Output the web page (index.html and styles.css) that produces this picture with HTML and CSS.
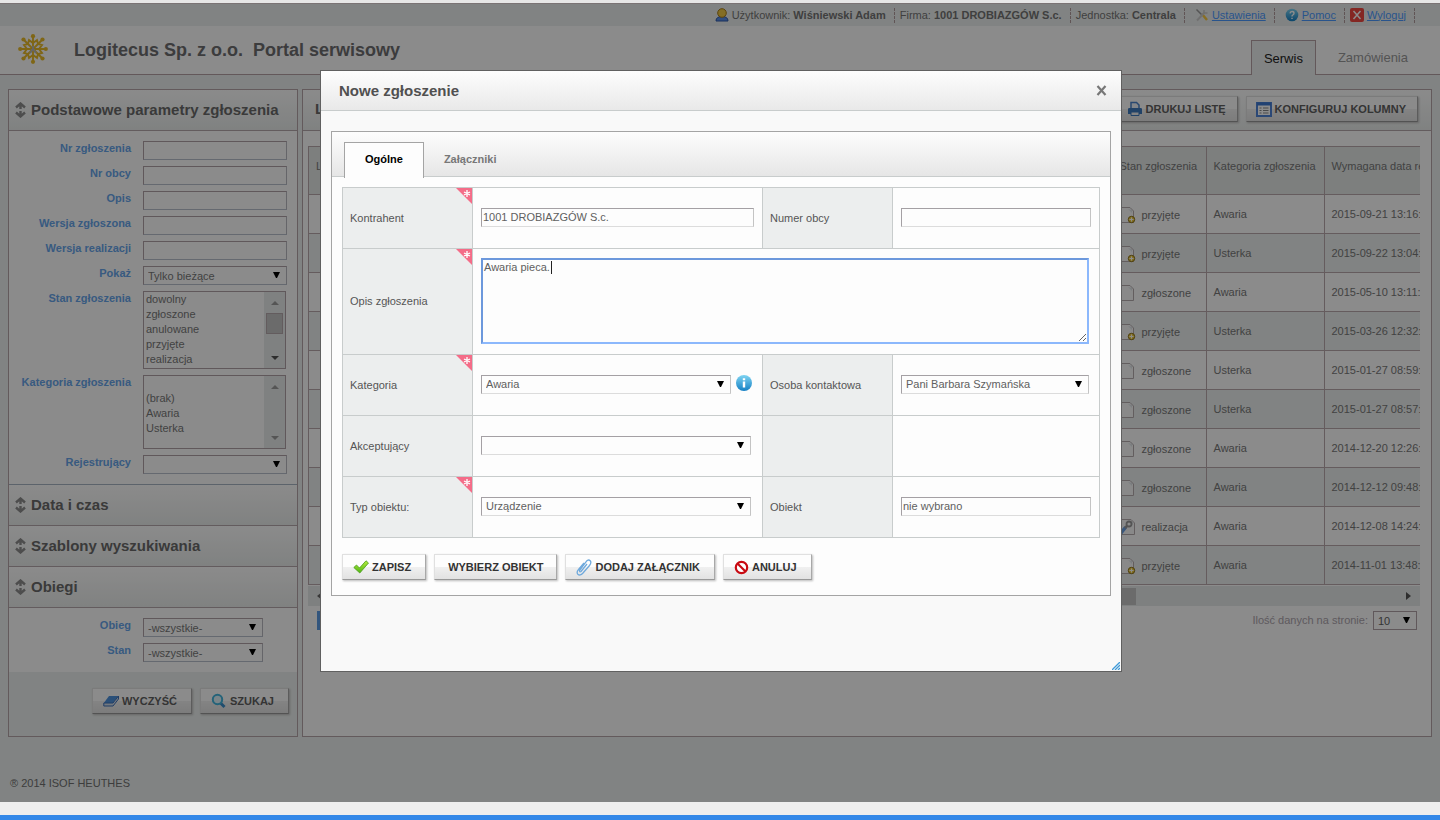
FILE: index.html
```html
<!DOCTYPE html>
<html lang="pl">
<head>
<meta charset="utf-8">
<title>Portal serwisowy – Nowe zgłoszenie</title>
<link rel="stylesheet" href="styles.css">
</head>
<body>
<svg class="defs" aria-hidden="true">
  <defs>
    <linearGradient id="sky" x1="0" y1="0" x2="0" y2="1"><stop offset="0" stop-color="#7fd4f2"/><stop offset="1" stop-color="#1580c4"/></linearGradient>
    <linearGradient id="lime" x1="0" y1="0" x2="0" y2="1"><stop offset="0" stop-color="#b5ee3c"/><stop offset="1" stop-color="#4fb414"/></linearGradient>
    <symbol id="updown" viewBox="0 0 11 16"><path d="M5.500 2V7M5.500 9V14M1 5.500L5.500 1.500L10 5.500M1 10.500L5.500 14.500L10 10.500" fill="none" stroke="#8c8c8c" stroke-width="2.400"/></symbol>
    <symbol id="doc" viewBox="0 0 16 17"><path d="M.5 .5H10L13.500 4V15.500H.5Z" fill="#fafafa" stroke="#b4acae"/><path d="M8 2L12 6V3Z" fill="#e0e6ea"/></symbol>
    <symbol id="doc-plus" viewBox="0 0 16 17"><use href="#doc" width="16" height="17"/><circle cx="11.500" cy="12.500" r="3.200" fill="#f0cc3c" stroke="#8a701c"/><path d="M11.500 10.500V14.500M9.500 12.500H13.500" stroke="#fff"/></symbol>
    <symbol id="doc-fix" viewBox="0 0 16 17"><use href="#doc" x="1" width="16" height="17"/><path d="M1 14L5 9" stroke="#6a9fe0" stroke-width="3.500" stroke-linecap="round"/><path d="M5 9L8 6" stroke="#999" stroke-width="2.500"/><circle cx="9" cy="5" r="2.500" fill="#fff" stroke="#999" stroke-width="1.800"/></symbol>
  </defs>
</svg>

<div class="chrome-top"></div>
<div class="page">
  <div class="topbar">
    <span class="topbar-item"><svg width="14" height="14" viewBox="0 0 14 14"><path d="M1 13Q1 8.500 7 8.500T13 13Z" fill="#5a8ee8" stroke="#2f58a8"/><circle cx="7" cy="5" r="4.300" fill="#f0c844" stroke="#a87c18"/></svg>Użytkownik: <b>Wiśniewski Adam</b></span>
    <span class="topbar-item">Firma: <b>1001 DROBIAZGÓW S.c.</b></span>
    <span class="topbar-item">Jednostka: <b>Centrala</b></span>
    <span class="topbar-item wide"><svg width="14" height="14" viewBox="0 0 14 14"><path d="M1.500 1.500L7 7" stroke="#999" stroke-width="1.500"/><path d="M7 6L12 12" stroke="#f8c840" stroke-width="2.500"/><path d="M2 12.500L9.500 4.500" stroke="#ccc" stroke-width="2"/><path d="M9 2V5H12.500" fill="none" stroke="#ccc" stroke-width="1.500"/></svg><a href="#">Ustawienia</a></span>
    <span class="topbar-item wide"><svg width="14" height="14" viewBox="0 0 14 14"><circle cx="7" cy="7" r="6.300" fill="url(#sky)"/><path d="M5 5.400Q5.200 3.500 7.100 3.500T9 5.200Q9 6.300 7.800 7Q7 7.500 7 8.400M7 9.800V11" fill="none" stroke="#fff" stroke-width="1.400"/></svg><a href="#">Pomoc</a></span>
    <span class="topbar-item"><svg width="14" height="14" viewBox="0 0 14 14"><rect width="14" height="14" rx="2" fill="#f04840"/><path d="M3.500 3L10.500 11M10.500 3L3.500 11" stroke="#fff" stroke-width="1.500"/></svg><a href="#">Wyloguj</a></span>
  </div>

  <header class="header">
    <svg class="logo" width="30" height="30" viewBox="-15 -15 30 30">
      <g fill="none" stroke="#e8ba28" stroke-width="1.900">
        <path d="M0-12V12M-12 0H12M-8.500-8.500L8.500 8.500M8.500-8.500L-8.500 8.500"/>
        <path d="M-4-9L0-6L4-9L5-5L9-4L6 0L9 4L5 5L4 9L0 6L-4 9L-5 5L-9 4L-6 0L-9-4L-5-5Z"/>
      </g>
      <g fill="#e8ba28"><circle cy="-12.800" r="2.100"/><circle cy="12.800" r="2.100"/><circle cx="-12.800" r="2.100"/><circle cx="12.800" r="2.100"/><circle cx="-9.500" cy="-9.500" r="2.100"/><circle cx="9.500" cy="-9.500" r="2.100"/><circle cx="-9.500" cy="9.500" r="2.100"/><circle cx="9.500" cy="9.500" r="2.100"/></g>
      <path d="M0-3V0M-3 4L0 0L3 4M-2 1H2" stroke="#b8b8b8" stroke-width="2" fill="none"/>
    </svg>
    <h1 class="brand">Logitecus Sp. z o.o.&nbsp; Portal serwisowy</h1>
    <nav class="main-tabs">
      <a href="#" class="main-tab active">Serwis</a>
      <a href="#" class="main-tab">Zamówienia</a>
    </nav>
  </header>

  <div class="content">
    <aside class="panel sidebar">
      <h2 class="panel-head"><svg width="11" height="16"><use href="#updown"/></svg>Podstawowe parametry zgłoszenia</h2>
      <form class="filters">
        <label for="f1">Nr zgłoszenia</label><input class="field" id="f1" type="text">
        <label for="f2">Nr obcy</label><input class="field" id="f2" type="text">
        <label for="f3">Opis</label><input class="field" id="f3" type="text">
        <label for="f4">Wersja zgłoszona</label><input class="field" id="f4" type="text">
        <label for="f5">Wersja realizacji</label><input class="field" id="f5" type="text">
        <label for="f6">Pokaż</label><select class="field pick" id="f6"><option>Tylko bieżące</option></select>
        <label for="f7">Stan zgłoszenia</label>
        <div class="listbox">
          <select id="f7" multiple size="5"><option>dowolny</option><option>zgłoszone</option><option>anulowane</option><option>przyjęte</option><option>realizacja</option></select>
          <div class="vbar"><i class="up"></i><i class="thumb"></i><i class="down on"></i></div>
        </div>
        <label for="f8">Kategoria zgłoszenia</label>
        <div class="listbox">
          <select id="f8" class="short" multiple size="4"><option></option><option>(brak)</option><option>Awaria</option><option>Usterka</option></select>
          <div class="vbar"><i class="up"></i><i class="down"></i></div>
        </div>
        <label for="f9">Rejestrujący</label><select class="field pick" id="f9"><option></option></select>
      </form>
      <h2 class="panel-head"><svg width="11" height="16"><use href="#updown"/></svg>Data i czas</h2>
      <h2 class="panel-head"><svg width="11" height="16"><use href="#updown"/></svg>Szablony wyszukiwania</h2>
      <h2 class="panel-head"><svg width="11" height="16"><use href="#updown"/></svg>Obiegi</h2>
      <form class="filters compact">
        <label for="g1">Obieg</label><select class="field pick" id="g1"><option>-wszystkie-</option></select>
        <label for="g2">Stan</label><select class="field pick" id="g2"><option>-wszystkie-</option></select>
      </form>
      <div class="sidebar-actions">
        <button class="btn" type="button"><svg width="16" height="14" viewBox="0 0 16 14"><path d="M6 2H15.500L10 9H.8Z" fill="#4f92dc"/><path d="M.8 9H10L15.500 2V5L10 12H.8Z" fill="#d4dce8" stroke="#3c70b8"/></svg>WYCZYŚĆ</button>
        <button class="btn" type="button"><svg width="16" height="16" viewBox="0 0 16 16"><path d="M9.500 10L13.500 14" stroke="#3a8cc8" stroke-width="3"/><circle cx="6.500" cy="6.500" r="4.700" fill="#dff2fa" stroke="#42b4dc" stroke-width="2"/></svg>SZUKAJ</button>
      </div>
    </aside>

    <main class="panel list">
      <div class="panel-head list-head">
        <h2 class="list-title">Lista zgłoszeń</h2>
        <button class="btn" type="button"><svg width="16" height="16" viewBox="0 0 16 16"><path d="M4 8V1.500H9.500L12 4V8" fill="#eef4fc" stroke="#4c84cc" stroke-width="1.500"/><path d="M1 8Q1 7 2.500 7H13.500Q15 7 15 8V13H1Z" fill="#3c78bc"/><path d="M4 11H12V14.500H4Z" fill="#eee" stroke="#3c78bc"/></svg>DRUKUJ LISTĘ</button>
        <button class="btn" type="button"><svg width="16" height="15" viewBox="0 0 16 15"><rect x="1" y="1" width="14" height="13" fill="#fff" stroke="#4f84d8" stroke-width="2"/><path d="M1 2H15" stroke="#3f78d0" stroke-width="3"/><path d="M3.500 6H5.500M3.500 8.500H5.500M3.500 11H5.500M7 6H12.500M7 8.500H12.500M7 11H12.500" stroke="#888"/></svg>KONFIGURUJ KOLUMNY</button>
      </div>
      <div class="grid-wrap">
        <table class="grid">
          <colgroup><col><col class="c-state"><col class="c-cat"><col class="c-date"></colgroup>
          <thead><tr><th>Lp.</th><th>Stan zgłoszenia</th><th>Kategoria zgłoszenia</th><th>Wymagana data realizacji</th></tr></thead>
          <tbody>
            <tr><td></td><td><span class="state"><svg width="16" height="17"><use href="#doc-plus"/></svg>przyjęte</span></td><td>Awaria</td><td>2015-09-21 13:16:00</td></tr>
            <tr><td></td><td><span class="state"><svg width="16" height="17"><use href="#doc-plus"/></svg>przyjęte</span></td><td>Usterka</td><td>2015-09-22 13:04:00</td></tr>
            <tr><td></td><td><span class="state"><svg width="16" height="17"><use href="#doc"/></svg>zgłoszone</span></td><td>Awaria</td><td>2015-05-10 13:11:00</td></tr>
            <tr><td></td><td><span class="state"><svg width="16" height="17"><use href="#doc-plus"/></svg>przyjęte</span></td><td>Usterka</td><td>2015-03-26 12:32:00</td></tr>
            <tr><td></td><td><span class="state"><svg width="16" height="17"><use href="#doc"/></svg>zgłoszone</span></td><td>Usterka</td><td>2015-01-27 08:59:00</td></tr>
            <tr><td></td><td><span class="state"><svg width="16" height="17"><use href="#doc"/></svg>zgłoszone</span></td><td>Usterka</td><td>2015-01-27 08:57:00</td></tr>
            <tr><td></td><td><span class="state"><svg width="16" height="17"><use href="#doc"/></svg>zgłoszone</span></td><td>Awaria</td><td>2014-12-20 12:26:00</td></tr>
            <tr><td></td><td><span class="state"><svg width="16" height="17"><use href="#doc"/></svg>zgłoszone</span></td><td>Awaria</td><td>2014-12-12 09:48:00</td></tr>
            <tr><td></td><td><span class="state"><svg width="16" height="17"><use href="#doc-fix"/></svg>realizacja</span></td><td>Awaria</td><td>2014-12-08 14:24:00</td></tr>
            <tr><td></td><td><span class="state"><svg width="16" height="17"><use href="#doc-plus"/></svg>przyjęte</span></td><td>Awaria</td><td>2014-11-01 13:48:00</td></tr>
          </tbody>
        </table>
        <div class="hbar"><i class="left"></i><i class="hthumb"></i><i class="right"></i></div>
      </div>
      <div class="pager">
        <a href="#" class="page-no">1</a>
        <label for="per">Ilość danych na stronie:</label>
        <select class="field pick per" id="per"><option>10</option></select>
      </div>
    </main>
  </div>
  <footer class="footer">® 2014 ISOF HEUTHES</footer>

  <div class="overlay"></div>

  <section class="modal" role="dialog" aria-labelledby="dlg">
    <div class="modal-head">
      <h2 class="modal-title" id="dlg">Nowe zgłoszenie</h2>
      <button class="close" type="button" aria-label="Zamknij"><svg width="11" height="11" viewBox="0 0 11 11"><path d="M1.500 1L9.500 10M9.500 1L1.500 10" stroke="#777" stroke-width="2.200"/></svg></button>
    </div>
    <div class="modal-body">
      <div class="box">
        <div class="tabs" role="tablist">
          <button class="tab active" type="button" role="tab">Ogólne</button>
          <button class="tab" type="button" role="tab">Załączniki</button>
        </div>
        <form class="box-body">
          <table class="form">
            <colgroup><col class="f-label"><col class="f-wide"><col class="f-label"><col></colgroup>
            <tr><th class="req"><label for="m1">Kontrahent</label></th><td><input class="field" id="m1" type="text" value="1001 DROBIAZGÓW S.c."></td><th><label for="m2">Numer obcy</label></th><td><input class="field" id="m2" type="text"></td></tr>
            <tr class="tall"><th class="req"><label for="m3">Opis zgłoszenia</label></th><td colspan="3"><div class="area"><textarea id="m3">Awaria pieca.</textarea><span class="caret"></span></div></td></tr>
            <tr><th class="req"><label for="m4">Kategoria</label></th><td><div class="with-info"><select class="field pick" id="m4"><option>Awaria</option></select><svg width="16" height="16" viewBox="0 0 16 16"><circle cx="8" cy="8" r="8" fill="url(#sky)"/><path d="M8 3.200V5.200M8 6.500V12.500" fill="none" stroke="#fff" stroke-width="2.400"/></svg></div></td><th><label for="m5">Osoba kontaktowa</label></th><td><select class="field pick" id="m5"><option>Pani Barbara Szymańska</option></select></td></tr>
            <tr><th><label for="m6">Akceptujący</label></th><td><select class="field pick" id="m6"><option></option></select></td><th></th><td></td></tr>
            <tr><th class="req"><label for="m7">Typ obiektu:</label></th><td><select class="field pick" id="m7"><option>Urządzenie</option></select></td><th><label for="m8">Obiekt</label></th><td><input class="field" id="m8" type="text" value="nie wybrano"></td></tr>
          </table>
          <div class="actions">
            <button class="btn" type="button"><svg width="16" height="14" viewBox="0 0 16 14"><path d="M.8 7.500L3.500 5L6.500 8L13 .8L15.500 3L6.800 13Z" fill="url(#lime)" stroke="#4a9c1c" stroke-width=".8"/></svg>ZAPISZ</button>
            <button class="btn plain" type="button">WYBIERZ OBIEKT</button>
            <button class="btn" type="button"><svg width="16" height="17" viewBox="0 0 16 17"><path d="M11 5L5 12.500Q3.500 13.500 3.500 11.500L9.800 3.200Q12-.2 14.200 1.700Q15.800 3.500 13.500 6.500L7 14Q4 17.300 1.800 15.200Q.2 13 2.500 10.500L8 4" fill="none" stroke="#6fa9dc" stroke-width="1.300"/></svg>DODAJ ZAŁĄCZNIK</button>
            <button class="btn" type="button"><svg width="15" height="15" viewBox="0 0 15 15"><circle cx="7.500" cy="7.500" r="5.700" fill="#fff" stroke="#c80a12" stroke-width="2.200"/><path d="M3.500 3.500L11.500 11.500" stroke="#c80a12" stroke-width="2.200"/></svg>ANULUJ</button>
          </div>
        </form>
      </div>
    </div>
    <svg class="grip" width="8" height="8" viewBox="0 0 8 8"><path d="M0 8L8 0M3 8L8 3M6 8L8 6" stroke="#3f9ad8" stroke-width="1.300"/></svg>
  </section>
</div>
<div class="chrome-bottom"></div>
</body>
</html>
```
FILE: styles.css
```css
* { box-sizing: border-box; }
body {
  margin: 0;
  min-height: 100vh;
  display: flex;
  flex-direction: column;
  font: 11px/15px "Liberation Sans", Arial, sans-serif;
  color: #7c7c7c;
}
h1, h2 { margin: 0; }
input, select, textarea, button { font: inherit; color: inherit; margin: 0; }
a { color: #4c9aff; }
.defs { position: absolute; width: 0; height: 0; }

.chrome-top { height: 4px; background: #e6e6e6; border-bottom: 1px solid #7a7374; }
.chrome-bottom { height: 18px; background: #eeeeee; border-bottom: 5px solid #3388e8; }
.page { position: relative; flex: 1; display: flex; flex-direction: column; background: #ebefee; }
.overlay { position: absolute; inset: 0; background: rgba(0, 0, 0, .45); }

.topbar {
  display: flex;
  align-items: center;
  justify-content: flex-end;
  height: 22px;
  padding-right: 25px;
  color: #747474;
}
.topbar-item { display: flex; align-items: center; gap: 3px; padding: 0 8px 0 5px; border-right: 1px dashed #b09a9c; }
.topbar-item svg { flex: none; }
.topbar-item.wide { padding-left: 10px; }

.header { display: flex; align-items: center; height: 49px; padding: 0 16px 0 18px; background: #fdfdfd; border-bottom: 1px solid #b4a0a4; }
.logo { margin-right: 26px; margin-bottom: 2px; }
.brand { flex: 1; font-size: 18px; line-height: 24px; color: #6e6e70; }
.main-tabs { display: flex; align-self: flex-end; height: 35px; font-size: 13px; line-height: 36px; gap: 6px; margin-bottom: -1px; }
.main-tab { padding: 0 16px; color: #999; text-decoration: none; }
.main-tab.active { padding: 0 12px; background: #ebefee; border: 1px solid #b4a0a4; border-bottom: 0; color: #222; }

.content { display: flex; gap: 4px; padding: 14px 8px 0; }
.panel { border: 1px solid #b4a4a8; background: #fdfdfd; }
.sidebar { flex: none; width: 290px; background: #ebefee; }
.list { flex: 1; min-width: 0; }
.panel-head {
  display: flex;
  align-items: center;
  gap: 5px;
  height: 41px;
  padding: 0 6px;
  background: linear-gradient(#fdfdfd, #e9eceb);
  border-bottom: 1px solid #b4a8ac;
  font-size: 15px;
  line-height: 20px;
  font-weight: bold;
  color: #6a6a6a;
}

.filters {
  display: grid;
  grid-template-columns: 122px 1fr;
  gap: 6px 12px;
  padding: 10px;
  padding-left: 0;
  background: #fdfdfd;
  border-bottom: 1px solid #a8b4c4;
}
.filters label { text-align: right; white-space: nowrap; font-weight: bold; line-height: 14px; color: #66a4ea; }
.filters.compact { padding-right: 34px; border-bottom: 0; }
.field {
  display: block;
  width: 100%;
  height: 19px;
  padding: 0 1px;
  border: 1px solid #d8d8d8;
  border-color: #a4a0a4 #c4c4c4 #dcdcdc #a4a0a4;
  border-radius: 0;
  background: #fdfdfd;
  color: #606060;
  outline: 0;
}
.pick {
  appearance: none;
  padding: 1px 20px 0 4px;
  background: #fdfdfd url("data:image/svg+xml,%3Csvg xmlns='http://www.w3.org/2000/svg' width='7' height='7'%3E%3Cpath d='M0 0H7L4 6H3Z'/%3E%3C/svg%3E") no-repeat right 6px top 5px;
}
.filters .field { border-color: #b0a0a6 #b8b8c0 #b8c0cc #b0a0a6; color: #787878; }
.listbox { display: flex; border: 1px solid #b0a0a6; margin-right: 1px; background: #fdfdfd; }
.listbox select { flex: 1; min-width: 0; height: 76px; border: 0; border-radius: 0; padding: 1px 0 0; background: none; overflow: hidden; color: #787878; outline: 0; }
.listbox select.short { height: 72px; }
.listbox option { min-height: 15px; height: 15px; padding: 0 2px; line-height: 15px; }
.vbar { flex: none; width: 21px; padding: 9px 2px 8px; display: flex; flex-direction: column; align-items: center; background: #e8ecec; }
.vbar .up { border: 4px solid transparent; border-top: 0; border-bottom-color: #9c9c9c; }
.vbar .down { border: 4px solid transparent; border-bottom: 0; border-top-color: #9c9c9c; margin-top: auto; }
.vbar .down.on { border-top-color: #555; }
.vbar .thumb { width: 17px; height: 21px; margin-top: 8px; background: #c4c4c4; border: 1px solid #b4a8ac; }
.sidebar-actions { display: flex; justify-content: flex-end; gap: 8px; padding: 16px 8px 22px; }

.btn {
  display: flex;
  align-items: center;
  gap: 3px;
  height: 26px;
  padding: 0 14px 0 10px;
  border: 1px solid #e0e0e0;
  border-right-color: #a8a8a8;
  border-bottom-color: #989898;
  background: linear-gradient(#fdfdfd 50%, #f0f0f0 50%, #e2e2e2);
  box-shadow: 1px 1px 2px #bbb;
  font-size: 11px;
  font-weight: bold;
  color: #333;
}
.btn.plain { padding: 0 13px; }
.sidebar .btn, .list .btn { color: #606060; }

.list-head { justify-content: flex-end; gap: 8px; padding: 0 13px 2px 12px; }
.list-head .btn { padding: 0 11px 0 9px; }
.list-title { flex: 1; font-size: 15px; }
.grid-wrap { margin: 15px 11px 0 5px; }
.grid { width: 100%; table-layout: fixed; border-collapse: collapse; color: #787878; }
.c-state { width: 94px; }
.c-cat { width: 118px; }
.c-date { width: 96px; }
.grid th, .grid td {
  height: 39px;
  padding: 0 0 0 7px;
  border: 1px solid #b8a8ac;
  border-right: 0;
  text-align: left;
  font-weight: normal;
  white-space: nowrap;
  overflow: hidden;
}
.grid th { height: 48px; padding-bottom: 8px; background: #e3e7e6; }
.grid tbody tr:nth-child(even) { background: #ebefee; }
.state { display: flex; align-items: center; gap: 6px; padding-top: 2px; }
.hbar { display: flex; align-items: center; height: 20px; margin-top: 1px; padding: 0 9px; background: #e6eaea; }
.hbar .left { border: 4px solid transparent; border-left: 0; border-right: 5px solid #666; }
.hbar .right { border: 4px solid transparent; border-right: 0; border-left: 5px solid #555; margin-left: auto; }
.hthumb { flex: none; width: 74%; height: 17px; margin-left: 4px; background: #c4c4c4; }
.pager { display: flex; align-items: center; gap: 5px; padding: 5px 14px 0; color: #aca4ac; }
.page-no { margin-right: auto; padding: 2px 6px; background: #5c9ce4; color: #fff; text-decoration: none; }
.pager .per { width: 44px; border-color: #b0a0a6; }

.footer { padding: 39px 10px 0; color: #707070; }

.modal {
  position: absolute;
  left: 320px;
  top: 66px;
  width: 802px;
  min-height: 602px;
  border: 1px solid #606060;
  background: #f9f9f9;
  color: #555;
}
.modal-head {
  display: flex;
  align-items: center;
  justify-content: space-between;
  height: 40px;
  padding: 0 14px 0 18px;
  background: linear-gradient(#fdfdfd, #e9e9e9);
  border-bottom: 1px solid #c8cccc;
}
.modal-title { font-size: 15px; line-height: 20px; color: #505050; }
.close { display: flex; padding: 0; border: 0; background: none; }
.modal-body { padding: 20px 10px; }
.box { border: 1px solid #a4a4a4; background: #fdfdfd; }
.tabs { display: flex; align-items: flex-end; height: 45px; padding: 0 12px; background: linear-gradient(#fdfdfd, #e6e6e6); border-bottom: 1px solid #c8cccc; }
.tab { height: 35px; padding: 2px 20px 0; border: 0; background: none; font-weight: bold; color: #777; }
.tab.active { height: 36px; margin-bottom: -2px; padding: 0 20px 2px; border: 1px solid #a4a4a4; border-bottom: 0; background: #fdfdfd; color: #000; }
.box-body { padding: 10px 10px 15px; }
.form { width: 100%; table-layout: fixed; border-collapse: collapse; }
.f-label { width: 130px; }
.f-wide { width: 290px; }
.form tr { height: 61px; }
.form tr.tall { height: 106px; }
.form th, .form td { padding: 0 7px; border: 1px solid #c8cccc; text-align: left; font-weight: normal; }
.form td { padding: 0 8px 2px; }
.form th { background: #eceeee; }
.form td .field { max-width: 191px; }
.form td .pick { max-width: 188px; }
.form td:nth-child(2) .field { max-width: 273px; }
.form td:nth-child(2) .pick { max-width: 270px; }
.form .req { background: #eceeee url("data:image/svg+xml,%3Csvg xmlns='http://www.w3.org/2000/svg' width='16' height='16'%3E%3Cpath d='M0 0H16V16Z' fill='%23f46c88'/%3E%3Cpath d='M11 2V9M8 4L14 7M14 4L8 7' stroke='%23fff' stroke-width='1.300'/%3E%3C/svg%3E") no-repeat right top; }
.with-info { display: flex; align-items: center; gap: 5px; }
.with-info .field { width: 250px; }
.with-info svg { flex: none; margin-bottom: 2px; }
.area { position: relative; margin-right: 2px; }
.area textarea { display: block; width: 100%; height: 86px; padding: 0 1px; border: 2px solid #74a4ec; border-color: #6c98dc #8cb8fc #8cb8fc #6c98dc; outline: 0; background: #fdfdfd; color: #606060; resize: vertical; }
.caret { position: absolute; left: 70px; top: 3px; width: 1px; height: 13px; background: #222; }
.actions { display: flex; gap: 8px; margin-top: 16px; }
.grip { position: absolute; right: 1px; bottom: 1px; }
```
